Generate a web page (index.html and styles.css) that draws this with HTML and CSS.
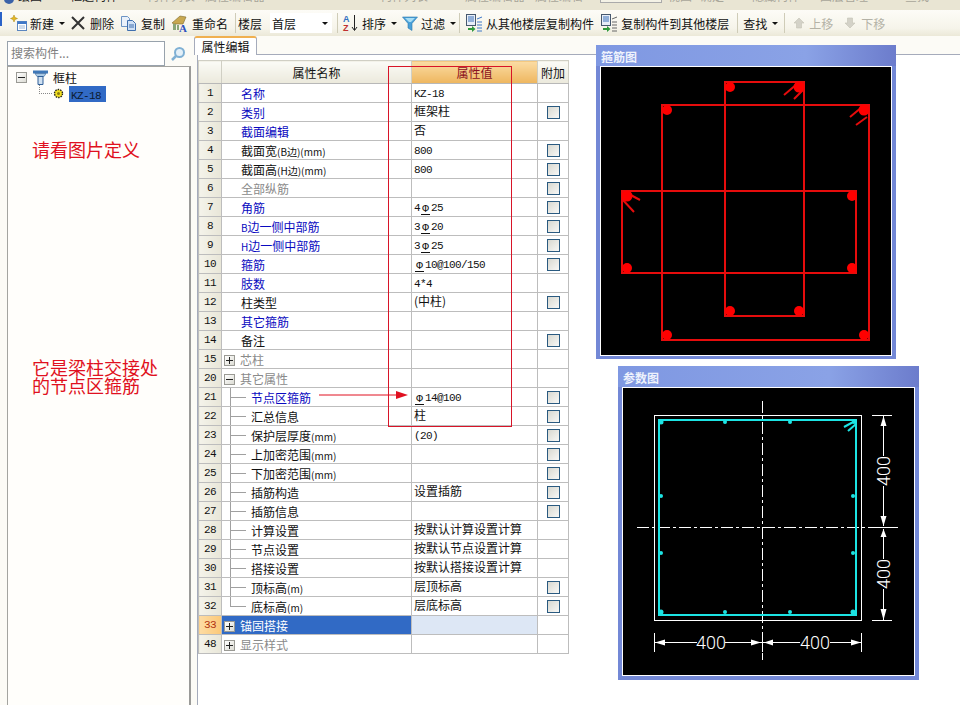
FILE: index.html
```html
<!DOCTYPE html>
<html lang="zh-CN">
<head>
    <meta charset="UTF-8">
    <meta name="viewport" content="width=device-width, initial-scale=1.0">
    <title>框柱 属性编辑</title>
    <link rel="stylesheet" href="styles.css">
</head>
<body>
<div class="app">
    <div class="menu-strip">
        <i class="logo"></i>
        <span class="dark m1">绘图</span>
        <span class="dark m2">框选构件</span>
        <span class="m3">构件列表</span>
        <span class="m4">属性编辑器</span>
        <span class="m5">构件列表</span>
        <span class="m6">属性编辑器</span>
        <span class="m7">属性编辑</span>
        <span class="m8">视图</span>
        <span class="m-box"></span>
        <span class="m9">确定</span>
        <span class="m10">隐藏构件</span>
        <span class="m11">图层管理</span>
        <span class="m12">查找</span>
    </div>

    <div class="toolbar">
        <span class="edge"></span>
        <div class="tb-item w-new">
            <svg width="17" height="16" viewBox="0 0 17 16"><path d="M4 0l1 2.500 2.500 1-2.500 1-1 2.500-1-2.500-2.500-1 2.500-1z" fill="#e6b820" stroke="#a88410" stroke-width=".5"/><rect x="7.500" y="6.500" width="9" height="9" fill="#fff" stroke="#5b86c0"/><rect x="7.500" y="6.500" width="9" height="2.500" fill="#3f78c8"/><path d="M9 11h6M9 13h6" stroke="#9db8d8"/></svg>
            <span>新建</span><i class="caret"></i>
        </div>
        <div class="tb-item w-del">
            <svg width="14" height="14" viewBox="0 0 14 14"><path d="M1 1l12 12M13 1L1 13" stroke="#333" stroke-width="2"/></svg>
            <span>删除</span>
        </div>
        <div class="tb-item w-copy">
            <svg width="17" height="15" viewBox="0 0 17 15"><path d="M1.500 .5h6l2 2v8h-8z" fill="#eaf1fa" stroke="#6d94c4"/><path d="M7.500 4.500h5l3 3v7h-8z" fill="#cfe0f5" stroke="#3f6fae"/><path d="M9 9h5M9 11h5" stroke="#3f6fae"/></svg>
            <span>复制</span>
        </div>
        <div class="tb-item w-ren">
            <svg width="17" height="17" viewBox="0 0 17 17"><path d="M1 8l8-7 6 1-3 7H4z" fill="#c8a850" stroke="#7d6a2c" stroke-width=".6"/><path d="M2 15V9h3v6zM6 15v-5h2v5z" fill="#8aa678"/><text x="8" y="16.500" class="ic-a">A</text></svg>
            <span>重命名</span>
        </div>
        <i class="sep s-a"></i>
        <div class="tb-item w-floor"><span>楼层</span></div>
        <div class="floor-select"><span>首层</span><i class="caret"></i></div>
        <i class="sep s-b"></i>
        <div class="tb-item w-sort">
            <svg width="17" height="18" viewBox="0 0 17 18"><text x="1" y="8" class="ic-az az-a">A</text><text x="1" y="17" class="ic-az az-z">Z</text><path d="M12.500 1v15M10 13l2.500 3.500L15 13" stroke="#222" fill="none"/></svg>
            <span>排序</span><i class="caret"></i>
        </div>
        <div class="tb-item w-filter">
            <svg width="16" height="15" viewBox="0 0 16 15"><path d="M.5 1h15L10 7.500V14.500L6 12V7.500z" fill="#4aa0d8" stroke="#2b78b0" stroke-width=".6"/><path d="M3 2h10L9 6H7z" fill="#a8def5"/></svg>
            <span>过滤</span><i class="caret"></i>
        </div>
        <i class="sep s-c"></i>
        <div class="tb-item w-from">
            <svg width="17" height="18" viewBox="0 0 17 18"><rect x=".5" y=".5" width="9" height="11" fill="#e8eef8" stroke="#46586e"/><path d="M2 3h6M2 5h6M2 7h6" stroke="#3a70b8"/><path d="M2 14h4v-2l3.500 3L6 18v-2H2z" fill="#2f9a3c"/><path d="M11 5l5-2M11 8h5M11 11h5M11 14h5M11 17h5" stroke="#3f78c8"/></svg>
            <span>从其他楼层复制构件</span>
        </div>
        <div class="tb-item w-to">
            <svg width="17" height="18" viewBox="0 0 17 18"><rect x=".5" y=".5" width="9" height="11" fill="#e8eef8" stroke="#46586e"/><path d="M2 3h6M2 5h6M2 7h6" stroke="#3a70b8"/><path d="M2 14h4v-2l3.500 3L6 18v-2H2z" fill="#2f9a3c"/><path d="M11 5l5-2M11 8h5M11 11h5M11 14h5M11 17h5" stroke="#666"/></svg>
            <span>复制构件到其他楼层</span>
        </div>
        <i class="sep s-d"></i>
        <div class="tb-item w-find"><span>查找</span><i class="caret"></i></div>
        <i class="sep s-e"></i>
        <div class="tb-item off w-up">
            <svg width="12" height="12" viewBox="0 0 12 12"><path d="M6 1l5 5H8.500v5h-5V6H1z" fill="#d4d2c8" stroke="#c4c2b6" stroke-width=".6"/></svg>
            <span>上移</span>
        </div>
        <div class="tb-item off w-down">
            <svg width="12" height="12" viewBox="0 0 12 12"><path d="M6 11L1 6h2.500V1h5v5H11z" fill="#d4d2c8" stroke="#c4c2b6" stroke-width=".6"/></svg>
            <span>下移</span>
        </div>
    </div>

    <div class="main">
        <div class="side">
            <div class="search">
                <div class="search-box">搜索构件...</div>
                <svg class="search-icon" width="16" height="16" viewBox="0 0 16 16"><circle cx="9.500" cy="6.500" r="4.500" fill="#e4f0f8" stroke="#7fb0d4" stroke-width="2"/><path d="M6 10l-4 4" stroke="#7fb0d4" stroke-width="2.500"/></svg>
            </div>
            <div class="tree">
                <div class="tree-root">
                    <span class="expander"><b class="bar"></b></span>
                    <svg width="15" height="15" viewBox="0 0 15 15"><path d="M0 .5h15v3H0z" fill="#3f78b8"/><path d="M2 3.500h11l-2 3H4z" fill="#a8c8e4" stroke="#2f5f98" stroke-width=".6"/><path d="M5 6.500h5v8H5z" fill="#cfe0f0" stroke="#2f5f98"/></svg>
                    <span>框柱</span>
                </div>
                <div class="tree-leaf">
                    <svg width="11" height="11" viewBox="0 0 11 11"><circle cx="5.500" cy="5.500" r="4" fill="#f2e020" stroke="#222" stroke-width="1.400" stroke-dasharray="1.500 1"/><circle cx="5.500" cy="5.500" r="1.500" fill="#8a7a10"/></svg>
                    <span class="tree-sel"><span class="num">KZ-18</span></span>
                </div>
                <p class="note note-a">请看图片定义</p>
                <p class="note note-b">它是梁柱交接处<br>的节点区箍筋</p>
            </div>
        </div>

        <div class="content">
            <div class="tabs"><div class="tab">属性编辑</div></div>
            <div class="tab-body">
                <table class="grid">
                    <colgroup><col class="c-no"><col class="c-name"><col class="c-val"><col class="c-add"></colgroup>
                    <thead>
                        <tr><th class="h-plain"></th><th class="h-plain">属性名称</th><th class="h-val">属性值</th><th class="h-plain">附加</th></tr>
                    </thead>
                    <tbody>
                        <tr><td class="no">1</td><td class="nm blue">名称</td><td class="val"><span class="num">KZ-18</span></td><td></td></tr>
                        <tr><td class="no">2</td><td class="nm blue">类别</td><td class="val">框架柱</td><td><i class="chk"></i></td></tr>
                        <tr><td class="no">3</td><td class="nm blue">截面编辑</td><td class="val">否</td><td></td></tr>
                        <tr><td class="no">4</td><td class="nm">截面宽<small>(B边)(mm)</small></td><td class="val"><span class="num">800</span></td><td><i class="chk"></i></td></tr>
                        <tr><td class="no">5</td><td class="nm">截面高<small>(H边)(mm)</small></td><td class="val"><span class="num">800</span></td><td><i class="chk"></i></td></tr>
                        <tr><td class="no">6</td><td class="nm gray">全部纵筋</td><td class="val"></td><td><i class="chk"></i></td></tr>
                        <tr><td class="no">7</td><td class="nm blue">角筋</td><td class="val"><span class="num">4<b class="rebar">Φ</b>25</span></td><td><i class="chk"></i></td></tr>
                        <tr><td class="no">8</td><td class="nm blue"><small>B</small>边一侧中部筋</td><td class="val"><span class="num">3<b class="rebar">Φ</b>20</span></td><td><i class="chk"></i></td></tr>
                        <tr><td class="no">9</td><td class="nm blue"><small>H</small>边一侧中部筋</td><td class="val"><span class="num">3<b class="rebar">Φ</b>25</span></td><td><i class="chk"></i></td></tr>
                        <tr><td class="no">10</td><td class="nm blue">箍筋</td><td class="val"><span class="num"><b class="rebar">Φ</b>10@100/150</span></td><td><i class="chk"></i></td></tr>
                        <tr><td class="no">11</td><td class="nm blue">肢数</td><td class="val"><span class="num">4*4</span></td><td></td></tr>
                        <tr><td class="no">12</td><td class="nm">柱类型</td><td class="val">(中柱)</td><td><i class="chk"></i></td></tr>
                        <tr><td class="no">13</td><td class="nm blue">其它箍筋</td><td class="val"></td><td></td></tr>
                        <tr><td class="no">14</td><td class="nm">备注</td><td class="val"></td><td><i class="chk"></i></td></tr>
                        <tr><td class="no">15</td><td class="grp gray"><span class="expander"><b class="bar"></b><b class="stem"></b></span>芯柱</td><td class="val"></td><td></td></tr>
                        <tr><td class="no">20</td><td class="grp gray"><span class="expander"><b class="bar"></b></span>其它属性</td><td class="val"></td><td></td></tr>
                        <tr><td class="no">21</td><td class="child blue">节点区箍筋</td><td class="val"><span class="num"><b class="rebar">Φ</b>14@100</span></td><td><i class="chk"></i></td></tr>
                        <tr><td class="no">22</td><td class="child">汇总信息</td><td class="val">柱</td><td><i class="chk"></i></td></tr>
                        <tr><td class="no">23</td><td class="child">保护层厚度<small>(mm)</small></td><td class="val"><span class="num">(20)</span></td><td><i class="chk"></i></td></tr>
                        <tr><td class="no">24</td><td class="child">上加密范围<small>(mm)</small></td><td class="val"></td><td><i class="chk"></i></td></tr>
                        <tr><td class="no">25</td><td class="child">下加密范围<small>(mm)</small></td><td class="val"></td><td><i class="chk"></i></td></tr>
                        <tr><td class="no">26</td><td class="child">插筋构造</td><td class="val">设置插筋</td><td><i class="chk"></i></td></tr>
                        <tr><td class="no">27</td><td class="child">插筋信息</td><td class="val"></td><td><i class="chk"></i></td></tr>
                        <tr><td class="no">28</td><td class="child">计算设置</td><td class="val">按默认计算设置计算</td><td></td></tr>
                        <tr><td class="no">29</td><td class="child">节点设置</td><td class="val">按默认节点设置计算</td><td></td></tr>
                        <tr><td class="no">30</td><td class="child">搭接设置</td><td class="val">按默认搭接设置计算</td><td></td></tr>
                        <tr><td class="no">31</td><td class="child">顶标高<small>(m)</small></td><td class="val">层顶标高</td><td><i class="chk"></i></td></tr>
                        <tr><td class="no">32</td><td class="child last">底标高<small>(m)</small></td><td class="val">层底标高</td><td><i class="chk"></i></td></tr>
                        <tr class="sel"><td class="no">33</td><td class="grp"><span class="expander"><b class="bar"></b><b class="stem"></b></span>锚固搭接</td><td class="val"></td><td></td></tr>
                        <tr><td class="no">48</td><td class="grp gray"><span class="expander"><b class="bar"></b><b class="stem"></b></span>显示样式</td><td class="val"></td><td></td></tr>
                    </tbody>
                </table>
            </div>
        </div>
    </div>

    <!-- annotations drawn over the grid -->
    <div class="mark-box"></div>
    <svg class="mark-arrow" width="90" height="10" viewBox="0 0 90 10"><path d="M0 5h78" stroke="#e01020"/><path d="M77 1l12 4-12 4z" fill="#e01020"/></svg>

    <div class="win win-rebar">
        <div class="win-title">箍筋图</div>
        <svg class="cad" width="290" height="288" viewBox="601 67 290 288">
            <g fill="none" stroke="#e60c0c" stroke-width="2">
                <rect x="662" y="105" width="207" height="235"/>
                <rect x="725" y="82" width="79" height="234"/>
                <rect x="622" y="191" width="234" height="82"/>
                <path d="M784 95l13-11M794 99l9-9M850 117l12-10M856 125l11-8M640 200l-13-7M634 212l-12-13"/>
            </g>
            <g fill="#f00">
                <circle cx="730" cy="87" r="5"/><circle cx="799" cy="87" r="5.500"/><circle cx="730" cy="311" r="5"/><circle cx="799" cy="311" r="5"/>
                <circle cx="667" cy="110" r="5"/><circle cx="864" cy="110" r="5.500"/><circle cx="667" cy="335" r="5"/><circle cx="864" cy="335" r="5"/>
                <circle cx="627" cy="196" r="5.500"/><circle cx="852" cy="196" r="5"/><circle cx="627" cy="268" r="5"/><circle cx="852" cy="268" r="5"/>
            </g>
        </svg>
    </div>

    <div class="win win-param">
        <div class="win-title">参数图</div>
        <svg class="cad" width="291" height="287" viewBox="623 389 291 287">
            <g fill="none" stroke="#fff">
                <rect x="654.500" y="416.500" width="207" height="205"/>
                <path d="M762.500 402v259M637 528.500h261" stroke-dasharray="12 3 3 3"/>
                <path d="M872 416.500h20M872 528.500h20M872 621.500h20M883.500 417v40M883.500 487v40M883.500 530v30M883.500 590v31"/>
                <path d="M654.500 634v19M762.500 634v19M861.500 634v19M655 643.500h42M725 643.500h37M763 643.500h37M830 643.500h31"/>
            </g>
            <g fill="#fff">
                <path d="M883.500 417l3 10h-6zM883.500 527l3-10h-6zM883.500 530l3 8h-6zM883.500 621l3-11h-6z"/>
                <path d="M655 643.500l10-3v6zM761 643.500l-10-3v6zM764 643.500l9-3v6zM861 643.500l-10-3v6z"/>
            </g>
            <g class="dim">
                <text x="711" y="650">400</text>
                <text x="815" y="650">400</text>
                <text transform="translate(890 472) rotate(-90)">400</text>
                <text transform="translate(890 575) rotate(-90)">400</text>
            </g>
            <g fill="none" stroke="#1ce4e4" stroke-width="2">
                <rect x="659" y="421" width="197" height="195"/>
                <path d="M844 428l11-6M848 432l8-7"/>
            </g>
            <g fill="#1ce4e4">
                <circle cx="661" cy="423" r="2.500"/><circle cx="725" cy="423" r="2"/><circle cx="790" cy="423" r="2"/><circle cx="854" cy="423" r="2"/>
                <circle cx="661" cy="497" r="2"/><circle cx="853" cy="497" r="2"/><circle cx="661" cy="554" r="2"/><circle cx="853" cy="554" r="2"/>
                <circle cx="661" cy="613" r="2.500"/><circle cx="725" cy="613" r="2"/><circle cx="790" cy="613" r="2"/><circle cx="853" cy="613" r="2.500"/>
            </g>
        </svg>
    </div>
</div>
</body>
</html>
```

FILE: styles.css
```css
* {
    box-sizing: border-box;
}
body {
    margin: 0;
    font-family: "Noto Sans CJK SC", "Liberation Sans", sans-serif;
    font-size: 12px;
    color: #111;
    background: #fcfbf6;
}
.app {
    position: relative;
    width: 960px;
    height: 705px;
    overflow: hidden;
    display: flex;
    flex-direction: column;
}

/* cut off menu strip at the very top */
.menu-strip {
    height: 10px;
    position: relative;
    overflow: hidden;
    background: #e9e5d3;
    color: #a8a69a;
    flex: none;
}
.menu-strip span {
    position: absolute;
    top: -13px;
    line-height: 17px;
}
.menu-strip .dark { color: #222; }
.menu-strip .logo {
    position: absolute;
    left: 4px;
    top: -6px;
    width: 10px;
    height: 10px;
    border-radius: 50%;
    background: #3a62a8;
}
.m1 { left: 18px; }
.m2 { left: 70px; }
.m3 { left: 147px; }
.m4 { left: 205px; }
.m5 { left: 380px; }
.m6 { left: 465px; }
.m7 { left: 535px; }
.m8 { left: 668px; }
.m9 { left: 700px; }
.m10 { left: 752px; }
.m11 { left: 820px; }
.m12 { left: 905px; }
.menu-strip .m-box {
    left: 600px;
    top: -8px;
    width: 62px;
    height: 11px;
    border: 1px solid #aaa;
    background: #f4f2e6;
}

/* toolbar */
.toolbar {
    height: 26px;
    flex: none;
    display: flex;
    align-items: center;
    padding-left: 10px;
    position: relative;
    background: linear-gradient(#fdfcf7, #f6f4ea 70%, #ebe8d8);
}
.toolbar .edge {
    position: absolute;
    left: 0;
    top: 2px;
    width: 2px;
    height: 14px;
    background: #2a62c8;
}
.tb-item {
    display: flex;
    align-items: center;
    gap: 3px;
    white-space: nowrap;
    flex: none;
}
.tb-item.off { color: #b4b2a6; }
.caret {
    display: block;
    width: 0;
    height: 0;
    margin-left: 2px;
    border: 3px solid transparent;
    border-top: 3px solid #111;
    border-bottom: 0;
}
.sep {
    display: block;
    width: 1px;
    height: 20px;
    background: #cfccb8;
    flex: none;
}
.w-del { margin-left: 6px; gap: 5px; }
.w-copy { margin-left: 6px; gap: 4px; }
.w-ren { margin-left: 6px; gap: 4px; }
.s-a { margin-left: 7px; }
.w-floor { margin-left: 2px; }
.floor-select {
    display: flex;
    align-items: center;
    justify-content: space-between;
    width: 62px;
    height: 20px;
    margin-left: 8px;
    padding: 0 4px 0 2px;
    background: #fff;
    flex: none;
}
.s-b { margin-left: 5px; }
.w-sort { margin-left: 4px; }
.w-filter { margin-left: 5px; }
.s-c { margin-left: 3px; }
.w-from { margin-left: 6px; }
.w-to { margin-left: 7px; }
.s-d { margin-left: 8px; }
.w-find { margin-left: 5px; }
.s-e { margin-left: 6px; }
.w-up { margin-left: 8px; gap: 4px; }
.w-down { margin-left: 11px; gap: 5px; }

/* left panel */
.main {
    flex: 1;
    display: flex;
    min-height: 0;
}
.side {
    width: 194px;
    flex: none;
    padding: 5px 3px 0 7px;
    display: flex;
    flex-direction: column;
}
.search {
    display: flex;
    align-items: center;
    height: 25px;
    flex: none;
}
.search-box {
    width: 158px;
    height: 25px;
    padding: 0 3px;
    line-height: 22px;
    color: #808080;
    background: #fff;
    border: 1px solid #98a2ac;
}
.search-icon {
    margin-left: 5px;
}
.tree {
    flex: 1;
    background: #fffefb;
    border-left: 1px solid #a4a4a0;
    border-top: 1px solid #a4a4a0;
    border-right: 2px solid #9a9a98;
    padding: 2px 0 0 8px;
}
.tree-root {
    display: flex;
    align-items: center;
    gap: 5px;
    height: 16px;
}
.tree-root .expander {
    margin-right: 1px;
}
.tree-leaf {
    display: flex;
    align-items: center;
    gap: 5px;
    height: 17px;
    margin-left: 23px;
    padding-left: 14px;
    background:
        repeating-linear-gradient(90deg, #888 0 1px, transparent 1px 2px) 0 8px / 13px 1px no-repeat,
        repeating-linear-gradient(#888 0 1px, transparent 1px 2px) 0 0 / 1px 9px no-repeat;
}
.tree-sel {
    width: 37px;
    height: 16px;
    line-height: 16px;
    padding-left: 2px;
    background: #316ac5;
    color: #0c1a30;
}
.note {
    margin: 0 0 0 16px;
    font-size: 18px;
    line-height: 18px;
    color: #e01020;
    white-space: nowrap;
}
.note-a { margin-top: 38px; }
.note-b { margin-top: 200px; }

/* property grid */
.content {
    flex: 1;
    min-width: 0;
    display: flex;
    flex-direction: column;
}
.tabs {
    height: 19px;
    flex: none;
    border-bottom: 1px solid #a5abbb;
}
.tab {
    width: 63px;
    height: 19px;
    padding-top: 1px;
    text-align: center;
    line-height: 16px;
    background: #fff;
    border: 1px solid #a5abbb;
    border-top: 2px solid #f0b050;
    border-bottom: 0;
    border-radius: 3px 3px 0 0;
}
.tab-body {
    flex: 1;
    margin-left: 3px;
    padding-top: 5px;
    background: #fff;
    border-left: 1px solid #a5abbb;
}
.grid {
    table-layout: fixed;
    width: 370px;
    border-collapse: collapse;
}
.c-no { width: 23px; }
.c-name { width: 190px; }
.c-val { width: 126px; }
.c-add { width: 31px; }
.grid th {
    height: 23px;
    padding: 0;
    font-weight: 400;
    border: 1px solid #d0cfc4;
    border-bottom-color: #b8b8b8;
}
.h-plain {
    background: linear-gradient(#fbfbf6, #ebe9dc);
}
.h-val {
    background: linear-gradient(#fbdca4, #eeb65e);
    color: #8a1020;
}
.grid td {
    height: 19px;
    padding: 0;
    border: 1px solid #bdbdbd;
    line-height: 17px;
    white-space: nowrap;
    overflow: hidden;
}
.grid small {
    font-size: 10px;
    line-height: 10px;
    margin-left: 2px;
}
.grid small:first-child {
    margin-left: 0;
}
.grid .no {
    text-align: center;
    font-family: "Liberation Mono", monospace;
    font-size: 11px;
    letter-spacing: -.6px;
    background: linear-gradient(90deg, #f4f3ea, #e8e6d8);
}
.nm { padding-left: 19px !important; }
.grp { padding-left: 2px !important; }
.grp .expander { margin-right: 5px; }
.grid .val {
    padding-left: 2px;
    line-height: 15px;
    vertical-align: top;
}
.blue { color: #0a0ac0; }
.gray { color: #8a8a8a; }
.child {
    padding-left: 29px !important;
    background:
        linear-gradient(#a0a0a0, #a0a0a0) 8px 0 / 1px 100% no-repeat,
        linear-gradient(#a0a0a0, #a0a0a0) 8px 9px / 16px 1px no-repeat;
}
.child.last {
    background:
        linear-gradient(#a0a0a0, #a0a0a0) 8px 0 / 1px 10px no-repeat,
        linear-gradient(#a0a0a0, #a0a0a0) 8px 9px / 16px 1px no-repeat;
}
.num {
    font-family: "Liberation Mono", monospace;
    font-size: 11px;
    letter-spacing: -.6px;
    line-height: 10px;
}
.rebar {
    display: inline-block;
    width: 9px;
    height: 10px;
    margin: 0 1px;
    line-height: 9px;
    font-weight: 400;
    letter-spacing: 0;
    text-align: center;
    vertical-align: -1px;
    border-bottom: 1px solid #111;
}
.chk {
    display: block;
    width: 13px;
    height: 13px;
    margin: 0 auto;
    border: 1px solid #2a5a80;
    background: linear-gradient(135deg, #d8d8d0, #f8f8f6);
}
.expander {
    display: inline-flex;
    position: relative;
    width: 11px;
    height: 11px;
    vertical-align: -1px;
    background: linear-gradient(135deg, #fff, #dcdcd4);
    border: 1px solid #9a9a94;
}
.expander .bar {
    position: absolute;
    left: 1px;
    top: 4px;
    width: 7px;
    height: 1px;
    background: #222;
}
.expander .stem {
    position: absolute;
    left: 4px;
    top: 1px;
    width: 1px;
    height: 7px;
    background: #222;
}
.sel .no {
    background: linear-gradient(90deg, #fddca4, #fbc878);
    color: #b03010;
}
.sel .grp {
    background: #316ac5;
    color: #fff;
}
.sel .val {
    background: #dde7f5;
}

/* annotations */
.mark-box {
    position: absolute;
    left: 388px;
    top: 66px;
    width: 124px;
    height: 361px;
    border: 1px solid #d81428;
}
.mark-arrow {
    position: absolute;
    left: 319px;
    top: 390px;
}

/* floating drawing windows */
.win {
    position: absolute;
    padding: 0 4px 4px 4px;
    background: #7388d6;
    border-radius: 2px 2px 0 0;
}
.win-title {
    height: 21px;
    padding: 3px 0 0 5px;
    line-height: 18px;
    font-weight: 700;
    color: #eef2fc;
    background: linear-gradient(90deg, #7f98e2, #8aa2e6 70%, #6c7ccc);
    margin: 0 -4px;
}
.win-rebar {
    left: 596px;
    top: 45px;
    width: 300px;
    height: 314px;
}
.win-param {
    left: 618px;
    top: 366px;
    width: 301px;
    height: 314px;
}
.cad {
    display: block;
    background: #000;
    outline: 1px solid #fff;
    margin: 1px 0 0 1px;
}
.dim text {
    font-family: Roboto, "Liberation Sans", sans-serif;
    font-size: 18px;
    font-weight: 300;
    text-anchor: middle;
    fill: #fff;
}
.ic-a {
    font-family: "Liberation Serif", serif;
    font-size: 11px;
    font-weight: 700;
    fill: #2a50c0;
}
.ic-az {
    font-family: "Liberation Sans", sans-serif;
    font-size: 9px;
    font-weight: 700;
}
.az-a { fill: #3070c0; }
.az-z { fill: #c03030; }
```
